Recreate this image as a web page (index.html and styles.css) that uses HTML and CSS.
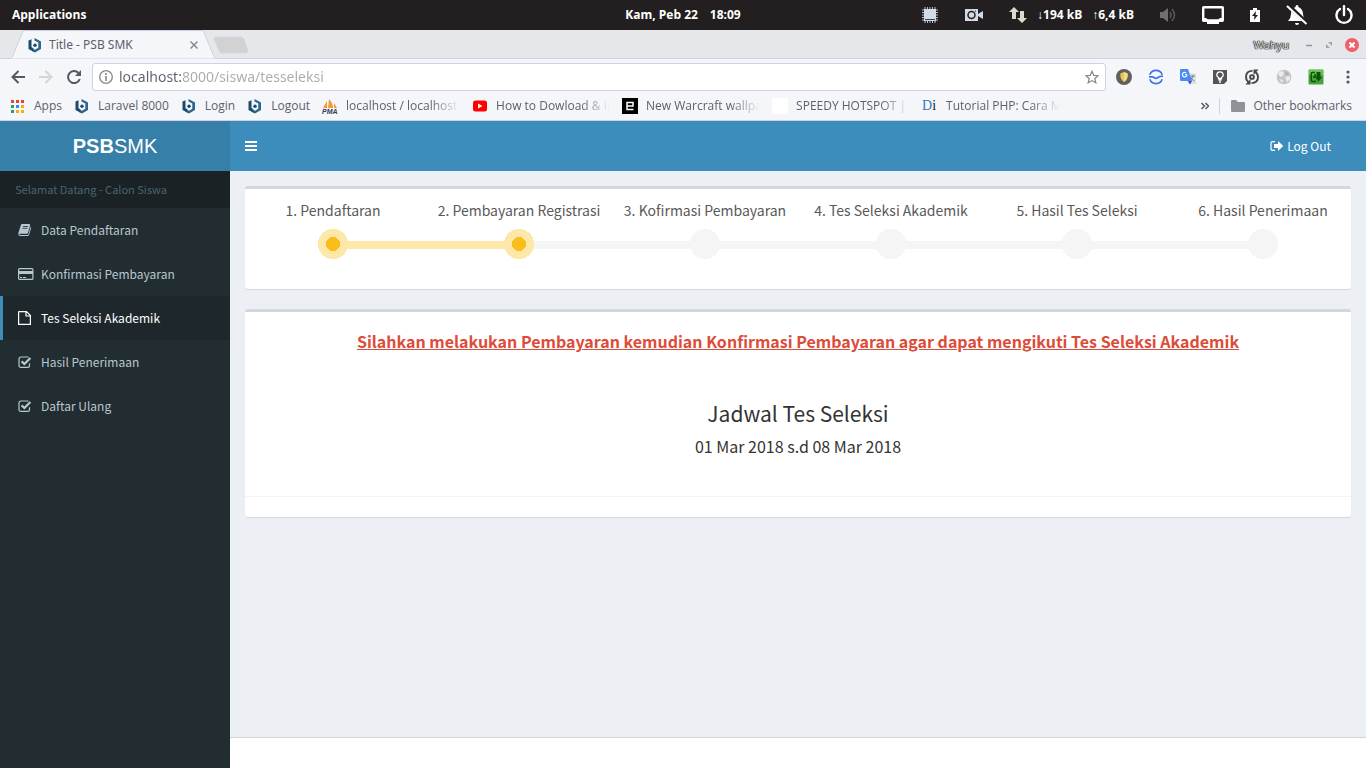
FILE: index.html
```html
<!DOCTYPE html>
<html lang="id">
<head>
<meta charset="utf-8">
<title>Title - PSB SMK</title>
<link rel="stylesheet" href="styles.css">
</head>
<body>
<svg class="symbols" aria-hidden="true">
  <symbol id="hex" viewBox="0 0 16 16">
    <path d="M7.500 1 14 4.500v7.500L8 15.500 5.500 14.200V11.800L8 12.800 11.300 10.700V5.600L7.500 3.500Z" fill="#2b668f"/>
    <path d="M1.500 3.600 4.500 2.200V10l2 1.500v3.300L1.500 12Z" fill="#1c4a6c"/>
    <circle cx="8" cy="8.200" r="1.700" fill="#1c4a6c"/>
  </symbol>
  <symbol id="check" viewBox="0 0 14 14">
    <path d="M11.500 8.200v2.300a1.900 1.900 0 0 1-1.900 1.900H2.900A1.900 1.900 0 0 1 1 10.500V3.900A1.900 1.900 0 0 1 2.900 2h6.700l.8.200" fill="none" stroke="currentColor" stroke-width="1.200"/>
    <path d="M3.600 6.300 6.400 9l6-6" fill="none" stroke="currentColor" stroke-width="2.300"/>
  </symbol>
</svg>

<div class="panel">
  <button class="panel-item apps-menu">Applications</button>
  <time class="clock"><span>Kam, Peb 22</span><span>18:09</span></time>
  <div class="indicators">
    <svg class="ind" viewBox="0 0 18 18" width="18" height="18"><path d="M4 1v16M6.500 1v16M9 1v16M11.500 1v16M14 1v16M1 4h16M1 6.500h16M1 9h16M1 11.500h16M1 14h16" stroke="#b7bdc9"/><rect x="3" y="3" width="12" height="12" fill="#d3dae6"/><path d="M4 13.500h10" stroke="#39414d"/></svg>
    <svg class="ind" viewBox="0 0 18 14" width="18" height="14"><rect y="1" width="13" height="12" fill="#d3dae6"/><path d="m13 6 5-3v8l-5-3Z" fill="#d3dae6"/><circle cx="6.500" cy="7" r="3.500" fill="none" stroke="#231f20" stroke-width="1.500"/><path d="M10 3h1" stroke="#231f20"/></svg>
    <span class="net">
      <svg viewBox="0 0 18 18" width="18" height="18"><path d="M5 1 0 6h3v7h4V6h3ZM13 17l5-5h-3V5h-4v7H8Z" fill="#dcdacd"/></svg>
      <span>↓194 kB</span><span>↑6,4 kB</span>
    </span>
    <svg class="ind" viewBox="0 0 16 16" width="16" height="16"><path d="M0 5h3l5-4v14l-5-4H0Z" fill="#726f6f"/><path d="M10 5q2 3 0 6M12 2q5 6 0 12" fill="none" stroke="#5c5959" stroke-width="1.500"/></svg>
    <svg class="ind" viewBox="0 0 22 18" width="22" height="18"><rect x="1.200" y="1.200" width="19.600" height="13.600" rx=".5" fill="none" stroke="#fff" stroke-width="2.400"/><path d="M5 17h12" stroke="#fff" stroke-width="2"/><path d="M2 12h2l2 1.500h10l2-1.500h2v3H2Z" fill="#fff"/></svg>
    <svg class="ind" viewBox="0 0 10 14" width="10" height="14"><path d="M0 2h3V0h4v2h3v12H0Z" fill="#fff"/><path d="M6 3 2 8h2.500L4 12l4-5H5.500Z" fill="#231f20"/></svg>
    <svg class="ind" viewBox="0 0 22 22" width="22" height="22"><path d="M11 1q1.500 0 1.500 2Q17 5 17 10q0 4 3 7H2q3-3 3-7 0-5 4.500-7Q9.500 1 11 1ZM9 19h4q0 2-2 2t-2-2Z" fill="#fff"/><path d="m2 1 19 18" stroke="#231f20" stroke-width="4"/><path d="m1 2 19.500 18" stroke="#fff" stroke-width="2"/></svg>
    <svg class="ind" viewBox="0 0 20 20" width="20" height="20"><path d="M6 4a7.500 7.500 0 1 0 8 0M10 1v9" fill="none" stroke="#fff" stroke-width="2.400" stroke-linecap="round"/></svg>
  </div>
</div>

<div class="tabstrip">
  <div class="tab">
    <svg class="tab-shape" viewBox="0 0 206 29" preserveAspectRatio="none"><path d="M0 28.500q1-.5 2-3L11.500 2.500Q12.500.5 14 .5h176q2 0 3 2l9.500 23q1 2.500 3 3" fill="#f4f6f9" stroke="#cdd2e5"/></svg>
    <div class="tab-content">
      <svg width="16" height="16"><use href="#hex"/></svg>
      <span class="tab-title">Title - PSB SMK</span>
      <button class="plain" aria-label="Tutup tab"><svg viewBox="0 0 8 8" width="8" height="8"><path d="m.5.5 7 7m0-7-7 7" stroke="#878a90" stroke-width="1.500"/></svg></button>
    </div>
  </div>
  <button class="plain new-tab" aria-label="Tab baru"><svg viewBox="0 0 36 18" width="36" height="18"><path d="M2 1h26q2 0 3 2l4 12q0 2-2 2H9q-2 0-3-2L1 3q0-2 1-2Z" fill="#d2d2d2" stroke="#d5d8e6"/></svg></button>
  <div class="window-buttons">
    <span class="user">Wahyu</span>
    <button class="plain" aria-label="Kecilkan"><svg viewBox="0 0 8 8" width="8" height="8"><path d="M1 4.500h6" stroke="#94979c" stroke-width="1.500"/></svg></button>
    <button class="plain" aria-label="Besarkan"><svg viewBox="0 0 8 8" width="8" height="8"><path d="M3 1h4v4ZM1 3v4h4Z" fill="#a0a3a8"/></svg></button>
    <button class="plain" aria-label="Tutup"><svg viewBox="0 0 14 14" width="14" height="14"><circle cx="7" cy="7" r="7" fill="#f05f6a"/><path d="m4.500 4.500 5 5m0-5-5 5" stroke="#fff" stroke-width="2.200"/></svg></button>
  </div>
</div>

<div class="toolbar">
  <div class="nav-buttons">
    <button class="plain" aria-label="Kembali"><svg viewBox="0 0 14 14" width="14" height="14"><path d="M14 7H1.500M7.500 1l-6 6 6 6" fill="none" stroke="#55585e" stroke-width="2"/></svg></button>
    <button class="plain" aria-label="Maju"><svg viewBox="0 0 14 14" width="14" height="14"><path d="M0 7h12.500M6.500 1l6 6-6 6" fill="none" stroke="#d3d5d9" stroke-width="2"/></svg></button>
    <button class="plain" aria-label="Muat ulang"><svg viewBox="0 0 14 14" width="14" height="14"><path d="M11.500 3A6 6 0 1 0 12.800 9" fill="none" stroke="#55585e" stroke-width="2"/><path d="M14 0v6H8Z" fill="#55585e"/></svg></button>
  </div>
  <div class="address">
    <svg viewBox="0 0 14 14" width="14" height="14"><circle cx="7" cy="7" r="6.300" fill="none" stroke="#85878c" stroke-width="1.300"/><path d="M7 3v2M7 6v5" stroke="#85878c" stroke-width="1.600"/></svg>
    <input class="url" type="text" aria-label="Alamat" value="localhost:8000/siswa/tesseleksi">
    <button class="plain" aria-label="Tandai"><svg viewBox="0 0 16 16" width="14" height="14"><path d="m8 1.500 2 4.600 5 .4-3.800 3.300 1.200 4.900L8 12.100l-4.400 2.600 1.200-4.900L1 6.500l5-.4Z" fill="none" stroke="#85878c" stroke-width="1.400"/></svg></button>
  </div>
  <div class="extensions">
    <button class="plain" aria-label="Perisai"><svg viewBox="0 0 16 16" width="16" height="16"><circle cx="8" cy="8" r="8" fill="#62605b"/><path d="M8 3q1.500 1 3.500 1.200 1 6-3.500 8.800Q3.500 10.200 4.500 4.200 6.500 4 8 3Z" fill="#e6c75b"/><path d="M8 3q1.500 1 3.500 1.200 1 6-3.500 8.800Z" fill="#f5dd84"/></svg></button>
    <button class="plain" aria-label="Gelombang"><svg viewBox="0 0 16 16" width="16" height="16"><g fill="none" stroke="#3f72e8" stroke-width="1.700"><path d="M1.800 5.800a6.600 6.600 0 0 1 12.400 0M1.800 10.200a6.600 6.600 0 0 0 12.400 0M1 7.800h3q1.500 0 2.500 1t3 0q1.500-1.600 5.500-1.600"/></g></svg></button>
    <button class="plain" aria-label="Terjemahan"><svg viewBox="0 0 16 16" width="16" height="16"><path d="M6 4h9q1 0 1 1v10H8Z" fill="#dfe1e4"/><path d="M1 0h7l4 12H1q-1 0-1-1V1q0-1 1-1Z" fill="#4a8af4"/><path d="M8 12h4l-2 3.500Z" fill="#3154c4"/><path d="M7 5.500H5M7 5.500a2.300 2.300 0 1 1-.8-1.600" fill="none" stroke="#fff" stroke-width="1.200"/><path d="M10.500 7H15M13 6v1q-.5 3-3 4m.5-3q1.500 3 4 4" fill="none" stroke="#668596"/></svg></button>
    <button class="plain" aria-label="Catatan"><svg viewBox="0 0 16 16" width="16" height="16"><path d="M1 1h14v11l-3 3H1Z" fill="#555"/><path d="M6.500 9.500v-1Q4.800 7.500 4.800 6a3.200 3.200 0 0 1 6.400 0q0 1.500-1.700 2.500v1ZM6.500 11h3M7 13h2" fill="none" stroke="#fff" stroke-width="1.300"/></svg></button>
    <button class="plain" aria-label="Sinkronkan"><svg viewBox="0 0 16 16" width="16" height="16"><g fill="none" stroke="#484848" stroke-width="1.900"><path d="M8.500 1.900Q2 2 2 8q0 3.500 3 5.300M7.500 14.100Q14 14 14 8q0-3.500-3-5.300"/><circle cx="8" cy="8" r="1.900"/></g><path d="M6.500 10v5.500H1.500ZM9.500 6V.5h5Z" fill="#484848"/></svg></button>
    <button class="plain" aria-label="Dunia"><svg viewBox="0 0 16 16" width="16" height="16"><circle cx="8" cy="8" r="7.300" fill="#c4c4c4"/><path d="M2 4q3-3 6-1L7 7 4 8ZM9 8l5-1q1 4-3 6ZM3 10l4 1-1 3Z" fill="#ececec"/><path d="m9 2 4 3-3 1Z" fill="#aaa"/></svg></button>
    <button class="plain" aria-label="Unduhan"><svg viewBox="0 0 16 16" width="16" height="16"><rect x=".5" y=".5" width="15" height="15" rx="1" fill="#46a33a"/><path d="M1 1h14v5H1Z" fill="#6fc251"/><path d="M7 3.500H4.500Q3.200 3.500 3.200 5v6q0 1.500 1.500 1.500H8M5 8h2V5" fill="none" stroke="#0c550c" stroke-width="1.500"/><path d="M8.500 3h4v5h1.500l-3.500 4.500L7 8h1.500Z" fill="#0c550c"/></svg></button>
    <button class="plain" aria-label="Menu"><svg viewBox="0 0 16 16" width="16" height="16"><g fill="#55585e"><circle cx="8" cy="3" r="1.600"/><circle cx="8" cy="8" r="1.600"/><circle cx="8" cy="13" r="1.600"/></g></svg></button>
  </div>
</div>

<nav class="bookmarks" aria-label="Bookmark">
  <a class="bookmark" href="#"><svg viewBox="0 0 16 16" width="16" height="16"><g fill="#e8403a"><path d="M1 2h3v3H1zM6 2h3v3H6zM11 2h3v3h-3z"/></g><path d="M1 7h3v3H1zM1 12h3v3H1z" fill="#2b9f55"/><path d="M6 7h3v3H6z" fill="#2e8bf0"/><path d="M11 7h3v3h-3zM6 12h3v3H6zM11 12h3v3h-3z" fill="#f7ae0c"/></svg><span>Apps</span></a>
  <a class="bookmark" href="#"><svg width="16" height="16"><use href="#hex"/></svg><span>Laravel 8000</span></a>
  <a class="bookmark" href="#"><svg width="16" height="16"><use href="#hex"/></svg><span>Login</span></a>
  <a class="bookmark" href="#"><svg width="16" height="16"><use href="#hex"/></svg><span>Logout</span></a>
  <a class="bookmark long" href="#"><svg viewBox="0 0 16 16" width="16" height="16"><path d="M1 10 5 3v7ZM6 10l1-9q4 4 4 9ZM12 10V5l3 5Z" fill="#f39a32"/><text x="0" y="16" font-family="Liberation Sans" font-size="7" font-weight="700" font-style="italic" fill="#34375f">PMA</text></svg><span>localhost / localhost</span></a>
  <a class="bookmark long" href="#"><svg viewBox="0 0 16 16" width="16" height="16"><rect x="1" y="2.500" width="14" height="11" rx="2.500" fill="#f00"/><path d="m6 5.500 4.500 2.500L6 10.500Z" fill="#fff"/></svg><span>How to Dowload &amp; In</span></a>
  <a class="bookmark long" href="#"><svg viewBox="0 0 16 16" width="16" height="16"><path d="M0 0h16v16H0z"/><path d="M5 8h6V4.500H5V11.500h6.500" fill="none" stroke="#fff" stroke-width="1.500"/></svg><span>New Warcraft wallpa</span></a>
  <a class="bookmark long" href="#"><svg viewBox="0 0 16 16" width="16" height="16"><path d="M0 0h16v16H0z" fill="#fff"/></svg><span>SPEEDY HOTSPOT |</span></a>
  <a class="bookmark long" href="#"><span class="di"><b>D</b><i>i</i></span><span>Tutorial PHP: Cara M</span></a>
  <div class="bookmarks-end">
    <button class="plain" aria-label="Bookmark lainnya"><svg viewBox="0 0 8 8" width="8" height="8"><path d="m.5 1 3 3-3 3m4-6 3 3-3 3" fill="none" stroke="#55585e" stroke-width="1.500"/></svg></button>
    <a class="bookmark other" href="#"><svg viewBox="0 0 14 12" width="14" height="12"><path d="M1 0h4l2 2h6q1 0 1 1v8q0 1-1 1H1q-1 0-1-1V1q0-1 1-1Z" fill="#8f9299"/></svg><span>Other bookmarks</span></a>
  </div>
</nav>

<div class="app">
  <aside class="sidebar">
    <a class="logo" href="#"><b>PSB</b>SMK</a>
    <div class="menu-header">Selamat Datang - Calon Siswa</div>
    <nav class="menu">
      <a href="#"><svg viewBox="0 0 14 14" width="14" height="14"><path d="M4.200 1h7q1.200.2.900 1.400L10 9.800q-.3 1-1.300 1H1.800q-.6 0-.4.6.2.500 1 .5h7.200q.6 0 .8-.6L12.600 4q.8.300.600 1.100L11 12q-.4 1-1.400 1H2.200Q.2 12.800.300 11 .3 10 .7 9L2.900 2Q3.200 1 4.200 1Z" fill="currentColor"/><path d="M5 3.500h5M4.400 5.300h5" stroke="#222d32" stroke-width=".8"/></svg><span>Data Pendaftaran</span></a>
      <a href="#"><svg viewBox="0 0 16 14" width="16" height="14"><rect x=".6" y="1.600" width="14.300" height="10.800" rx="1" fill="none" stroke="currentColor" stroke-width="1.200"/><path d="M1 4h14v3H1z" fill="currentColor"/><path d="M2 10.500h2M5 10.500h3" stroke="currentColor"/></svg><span>Konfirmasi Pembayaran</span></a>
      <a class="active" href="#"><svg viewBox="0 0 14 14" width="14" height="14"><path d="M1.500.6h7L12.400 4.500v8.900H.6V1q0-.4.4-.4ZM8 .6V5h4.400" fill="none" stroke="currentColor" stroke-width="1.200"/></svg><span>Tes Seleksi Akademik</span></a>
      <a href="#"><svg width="14" height="14"><use href="#check"/></svg><span>Hasil Penerimaan</span></a>
      <a href="#"><svg width="14" height="14"><use href="#check"/></svg><span>Daftar Ulang</span></a>
    </nav>
  </aside>
  <div class="page">
    <header class="navbar">
      <button class="plain" aria-label="Menu samping"><svg viewBox="0 0 12 10" width="12" height="10"><path d="M0 1h12M0 5h12M0 9h12" stroke="#fff" stroke-width="2"/></svg></button>
      <a class="logout" href="#"><svg viewBox="0 0 14 12" width="14" height="12"><path d="M5 1.600H2.600Q1 1.600 1 3v6q0 1.400 1.600 1.400H5" fill="none" stroke="#fff" stroke-width="1.200"/><path d="M4 4h4V1l5.300 5L8 11V8H4Z" fill="#fff"/></svg><span>Log Out</span></a>
    </header>
    <main class="content">
      <section class="box">
        <ol class="steps">
          <li class="done">1. Pendaftaran</li>
          <li class="done">2. Pembayaran Registrasi</li>
          <li>3. Kofirmasi Pembayaran</li>
          <li>4. Tes Seleksi Akademik</li>
          <li>5. Hasil Tes Seleksi</li>
          <li>6. Hasil Penerimaan</li>
        </ol>
      </section>
      <section class="box schedule">
        <div class="schedule-body">
          <h4 class="notice">Silahkan melakukan Pembayaran kemudian Konfirmasi Pembayaran agar dapat mengikuti Tes Seleksi Akademik</h4>
          <h3 class="title">Jadwal Tes Seleksi</h3>
          <p class="dates">01 Mar 2018 s.d 08 Mar 2018</p>
        </div>
        <div class="box-footer"></div>
      </section>
    </main>
    <footer class="footer"></footer>
  </div>
</div>
</body>
</html>
```

FILE: styles.css
```css
* { box-sizing: border-box; }

body {
  margin: 0;
  height: 100vh;
  display: flex;
  flex-direction: column;
  overflow: hidden;
  background: #fff;
  font-family: "Noto Sans", "Open Sans", sans-serif;
  font-size: 12px;
  color: #5c616c;
}

svg { display: block; flex: none; }
.symbols { position: absolute; width: 0; height: 0; }
a { color: inherit; text-decoration: none; }

.plain {
  display: flex;
  align-items: center;
  justify-content: center;
  padding: 0;
  border: 0;
  background: none;
}

/* Desktop panel */
.panel {
  display: grid;
  grid-template-columns: 1fr auto 1fr;
  align-items: center;
  height: 30px;
  padding: 0 12px;
  background: #231f20;
  color: #fff;
  font-family: "Open Sans", "Noto Sans", sans-serif;
  font-weight: 700;
  line-height: 16px;
}
.apps-menu {
  justify-self: start;
  padding: 0;
  border: 0;
  background: none;
  color: inherit;
  font: inherit;
}
.clock { display: flex; gap: 12px; }
.indicators { display: flex; align-items: center; justify-content: flex-end; gap: 26px; }
.net { display: flex; align-items: center; gap: 10px; }

/* Tab strip */
.tabstrip {
  display: flex;
  align-items: stretch;
  height: 29px;
  padding-left: 11px;
  background: #e6e7eb;
  box-shadow: inset 0 -1px #cdd2e5;
}
.tab { display: grid; width: 206px; }
.tab-shape, .tab-content { grid-area: 1 / 1; }
.tab-shape { width: 100%; height: 29px; }
.tab-content { display: flex; align-items: center; padding: 0 19px 0 16px; gap: 6px; }
.tab-title { flex: 1; }
.new-tab { margin-left: -4px; }
.window-buttons { display: flex; align-items: center; gap: 12px; margin-left: auto; padding-right: 7px; }
.user {
  margin-right: 4px;
  color: #ddd;
  font-size: 11px;
  text-shadow: 0 0 1px #222, 0 0 1px #222, 0 0 1px #222, 0 0 1px #222;
}

/* Toolbar */
.toolbar {
  display: flex;
  align-items: center;
  height: 36px;
  padding: 0 10px;
  gap: 10px;
  background: #f4f6f9;
}
.nav-buttons { display: flex; gap: 14px; padding: 0 1px; }
.address {
  flex: 1;
  display: flex;
  align-items: center;
  gap: 6px;
  height: 28px;
  padding: 0 6px;
  border: 1px solid #cdd2e5;
  border-radius: 3px;
  background: #fff;
}
.url {
  flex: 1;
  min-width: 0;
  padding: 0;
  border: 0;
  outline: 0;
  font: 14px/20px "Noto Sans", "Open Sans", sans-serif;
  color: #a9abb0;
  background: linear-gradient(90deg, #5c616c 62px, #a9abb0 62px);
  -webkit-background-clip: text;
  background-clip: text;
  -webkit-text-fill-color: transparent;
}
.extensions { display: flex; gap: 16px; }

/* Bookmark bar */
.bookmarks {
  display: flex;
  align-items: center;
  height: 26px;
  padding: 0 14px 5px 10px;
  gap: 12px;
  background: #f4f6f9;
  box-shadow: inset 0 -1px #cdd2e5;
  font-family: "Open Sans", "Noto Sans", sans-serif;
  line-height: 16px;
  white-space: nowrap;
}
.bookmark { display: flex; align-items: center; gap: 8px; }
.long > span:last-child {
  width: 114px;
  -webkit-mask-image: linear-gradient(90deg, #000 84px, transparent 114px);
  mask-image: linear-gradient(90deg, #000 84px, transparent 114px);
}
.di {
  display: flex;
  width: 16px;
  color: #111;
  font-family: "Liberation Serif", serif;
  font-size: 14px;
}
.di b { color: #3577bd; font-weight: 400; }
.di i { font-style: normal; }
.bookmarks-end { display: flex; align-items: center; gap: 10px; margin-left: auto; }
.other { padding-left: 11px; border-left: 1px solid #cdd2e5; }

/* Application */
.app {
  flex: 1;
  display: flex;
  min-height: 0;
  font-family: "Noto Sans CJK SC", sans-serif;
  line-height: 20px;
}
.sidebar { flex: none; width: 230px; background: #222d32; color: #b8c7ce; }
.logo {
  display: block;
  height: 50px;
  background: #367fa9;
  color: #fff;
  font: 20px/50px "Liberation Sans", Arial, sans-serif;
  text-align: center;
}
.menu-header { padding: 8px 15px 9px; background: #1a2226; color: #4b646f; font-size: 11px; }
.menu a {
  display: flex;
  align-items: center;
  gap: 9px;
  padding: 12px 15px;
  border-left: 3px solid transparent;
}
.menu svg { margin-right: -2px; }
.menu svg[width="14"] { margin-right: 0; }
.menu a.active { border-color: #3c8dbc; background: #1e282c; color: #fff; }

.page { flex: 1; min-width: 0; display: flex; flex-direction: column; background: #ecf0f5; }
.navbar {
  display: flex;
  align-items: center;
  justify-content: space-between;
  height: 50px;
  padding: 0 35px 0 15px;
  background: #3c8dbc;
  color: #fff;
}
.logout { display: flex; align-items: center; gap: 3px; }
.content { flex: 1; padding: 15px; }

.box {
  margin-bottom: 20px;
  border-top: 3px solid #d2d6de;
  border-radius: 3px;
  background: #fff;
  box-shadow: 0 1px 1px rgba(0, 0, 0, .1);
}
.steps {
  display: grid;
  grid-template-columns: repeat(6, 1fr);
  margin: 0 -5px;
  padding: 11px 0 30px;
  list-style: none;
  color: #595959;
  font-size: 14px;
  text-align: center;
  white-space: nowrap;
}
/* Marker disc over the connecting rail */
.steps li::after {
  content: "";
  display: block;
  height: 30px;
  margin-top: 9px;
  background:
    radial-gradient(circle at center, var(--dot, #f5f5f5) 0 7px, var(--rail, #f5f5f5) 7px 15px, transparent 15px) no-repeat,
    linear-gradient(var(--before, #f5f5f5), var(--before, #f5f5f5)) 0 12px / 50% 8px no-repeat,
    linear-gradient(var(--after, #f5f5f5), var(--after, #f5f5f5)) 100% 12px / 50% 8px no-repeat;
}
.steps .done { --dot: #fbbd19; --rail: #fde8aa; --before: #fde8aa; }
.steps .done:has(+ .done) { --after: #fde8aa; }
.steps li:first-child { --before: transparent; }
.steps li:last-child { --after: transparent; }

.schedule { color: #333; text-align: center; }
.schedule-body { padding: 19px 10px 40px; }
.notice { margin: 0; color: #dd4b39; font-size: 16px; line-height: 20px; text-decoration: underline; }
.title { margin: 48px 0 9px; font-size: 21px; font-weight: 400; line-height: 28px; }
.dates { margin: 0; font-size: 16px; line-height: 20px; }
.box-footer { height: 21px; border-top: 1px solid #f4f4f4; }
.footer { height: 31px; border-top: 1px solid #d2d6de; background: #fff; }
```
